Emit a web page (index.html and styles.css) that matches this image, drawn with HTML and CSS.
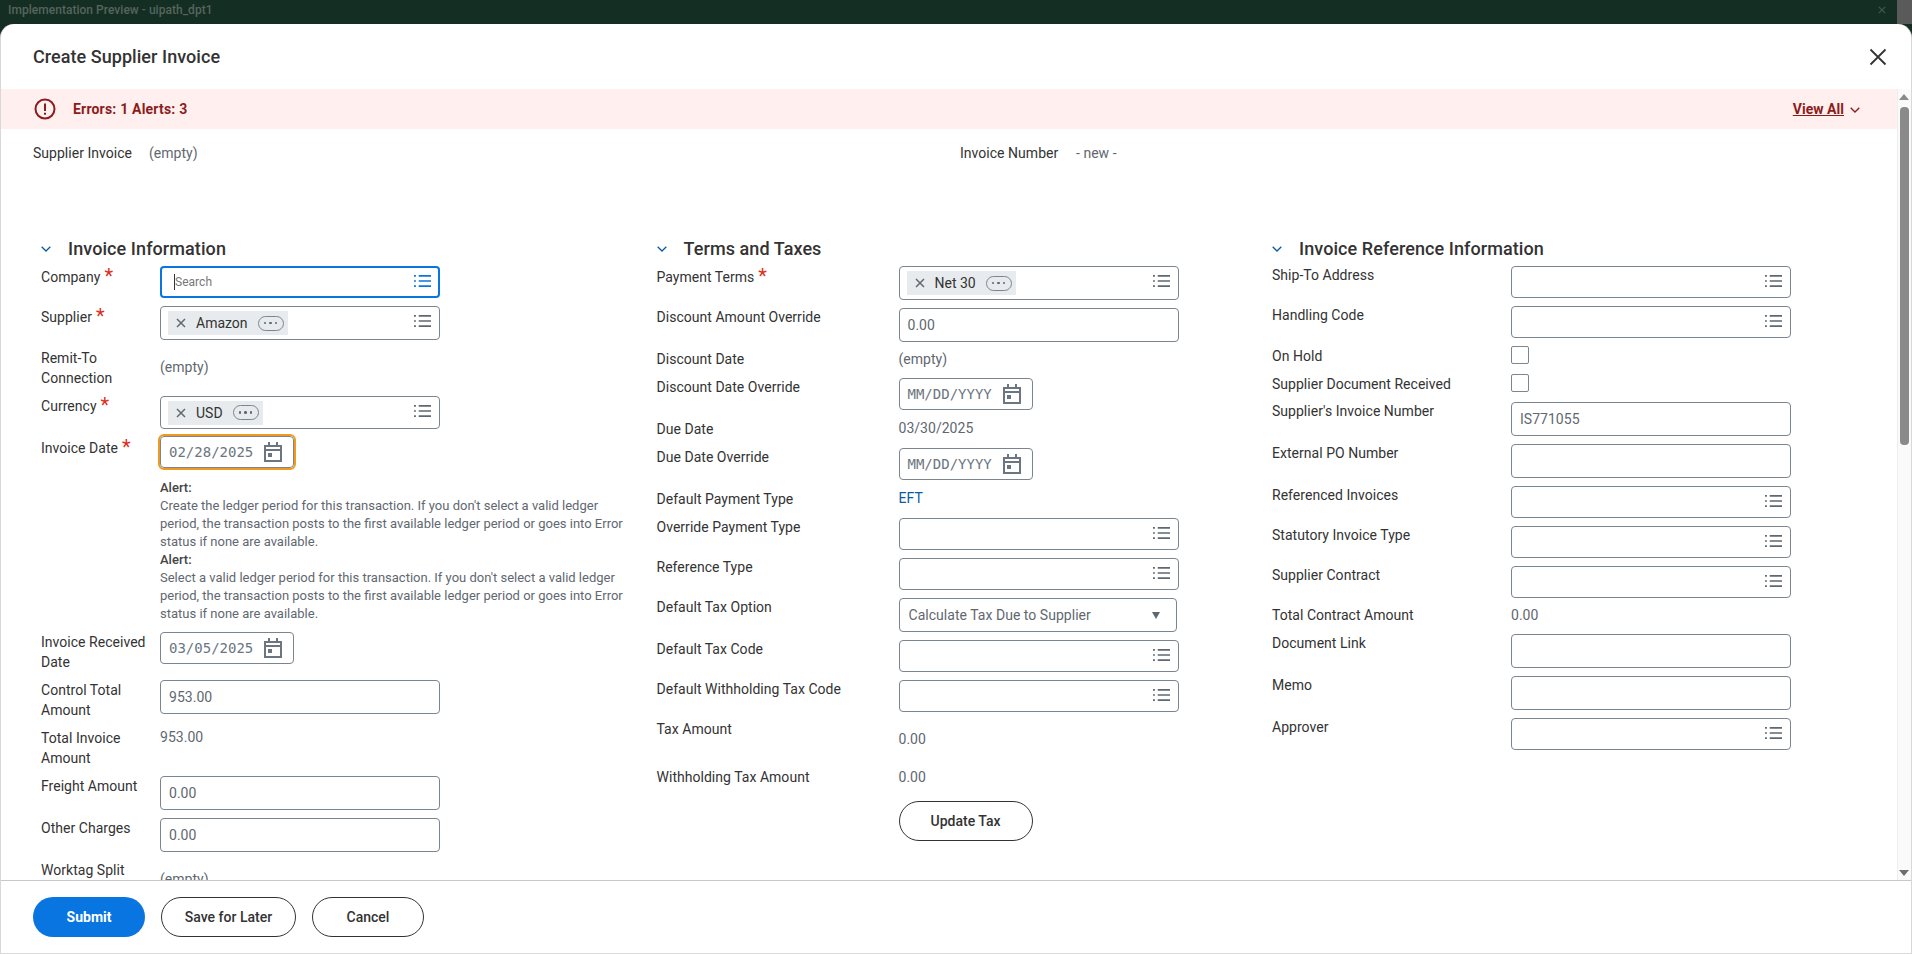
FILE: index.html
```html
<!DOCTYPE html>
<html lang="en">
<head>
  <meta charset="UTF-8" />
  <title>Create Supplier Invoice</title>
  <link rel="stylesheet" href="styles.css">
</head>
<body>
  <svg class="sprite" aria-hidden="true">
    <symbol id="i-list" viewBox="0 0 18 14">
      <path d="M5 1.5h13M5 7h13M5 12.500h13" fill="none" stroke="currentColor" stroke-width="1.8"/>
      <path d="M0 .6h2v1.800H0zM0 6.100h2v1.800H0zM0 11.600h2v1.800H0z" fill="currentColor"/>
    </symbol>
    <symbol id="i-cal" viewBox="0 0 18 20">
      <path d="M1 4h16v15H1zM1 8h16" fill="none" stroke="currentColor" stroke-width="2"/>
      <path d="M4 0h2v4H4zM12 0h2v4h-2zM4 11h4v4H4z" fill="currentColor"/>
    </symbol>
    <symbol id="i-x" viewBox="0 0 10 10">
      <path d="M1 1l8 8M9 1l-8 8" fill="none" stroke="currentColor" stroke-width="1.500"/>
    </symbol>
    <symbol id="i-chev" viewBox="0 0 10 6">
      <path d="M.7.7L5 5l4.300-4.300" fill="none" stroke="currentColor" stroke-width="1.300"/>
    </symbol>
  </svg>

  <div class="topbar">
    <span class="topbar-title">Implementation Preview - uipath_dpt1</span>
    <svg class="topbar-x"><use href="#i-x"/></svg>
  </div>

  <div class="modal">
    <header class="modal-head">
      <h1>Create Supplier Invoice</h1>
      <svg class="modal-close" viewBox="0 0 18 18"><path d="M1.500 1.500l15 15M16.500 1.500l-15 15" fill="none" stroke="currentColor" stroke-width="1.800"/></svg>
    </header>

    <div class="modal-middle">
      <main class="content">
        <div class="banner">
          <svg class="banner-icon" viewBox="0 0 22 22">
            <circle cx="11" cy="11" r="9.500" fill="none" stroke="currentColor" stroke-width="2"/>
            <path d="M10 5.500h2v7.500h-2zM10 14.800h2v2h-2z" fill="currentColor"/>
          </svg>
          <span class="banner-text">Errors: 1 Alerts: 3</span>
          <a class="banner-link">View All</a>
          <svg class="banner-chev"><use href="#i-chev"/></svg>
        </div>

        <div class="meta">
          <div class="meta-item">
            <span class="meta-label">Supplier Invoice</span>
            <span class="value">(empty)</span>
          </div>
          <div class="meta-item">
            <span class="meta-label">Invoice Number</span>
            <span class="value">- new -</span>
          </div>
        </div>

        <div class="columns">
          <!-- Invoice Information -->
          <section class="col col-1">
            <h2 class="section-title"><svg class="section-chev"><use href="#i-chev"/></svg>Invoice Information</h2>
            <div class="rows">
              <div class="row">
                <div class="label label-req">Company<span class="req">*</span></div>
                <div class="field field-focus"><span class="search">Search</span><svg class="i-list"><use href="#i-list"/></svg></div>
              </div>
              <div class="row">
                <div class="label label-req">Supplier<span class="req">*</span></div>
                <div class="field field-chip">
                  <span class="chip"><svg class="chip-x"><use href="#i-x"/></svg>Amazon<span class="chip-more"><i></i><i></i><i></i></span></span>
                  <svg class="i-list"><use href="#i-list"/></svg>
                </div>
              </div>
              <div class="row">
                <div class="label">Remit-To Connection</div>
                <div class="value value-mid">(empty)</div>
              </div>
              <div class="row">
                <div class="label">Currency<span class="req">*</span></div>
                <div class="field field-chip field-chip-sm">
                  <span class="chip"><svg class="chip-x"><use href="#i-x"/></svg>USD<span class="chip-more"><i></i><i></i><i></i></span></span>
                  <svg class="i-list"><use href="#i-list"/></svg>
                </div>
              </div>
              <div class="row">
                <div class="label label-req">Invoice Date<span class="req">*</span></div>
                <div class="field-stack">
                  <div class="field field-date field-alert"><span class="mono">02/28/2025</span><svg class="i-cal"><use href="#i-cal"/></svg></div>
                  <div class="alert">
                    <div class="alert-title">Alert:</div>
                    <div>Create the ledger period for this transaction. If you don't select a valid ledger period, the transaction posts to the first available ledger period or goes into Error status if none are available.</div>
                    <div class="alert-title">Alert:</div>
                    <div>Select a valid ledger period for this transaction. If you don't select a valid ledger period, the transaction posts to the first available ledger period or goes into Error status if none are available.</div>
                  </div>
                </div>
              </div>
              <div class="row">
                <div class="label">Invoice Received Date</div>
                <div class="field field-date"><span class="mono">03/05/2025</span><svg class="i-cal"><use href="#i-cal"/></svg></div>
              </div>
              <div class="row">
                <div class="label">Control Total Amount</div>
                <div class="field field-text">953.00</div>
              </div>
              <div class="row">
                <div class="label">Total Invoice Amount</div>
                <div class="value">953.00</div>
              </div>
              <div class="row">
                <div class="label">Freight Amount</div>
                <div class="field field-text">0.00</div>
              </div>
              <div class="row">
                <div class="label">Other Charges</div>
                <div class="field field-text">0.00</div>
              </div>
              <div class="row row-tall">
                <div class="label">Worktag Split</div>
                <div class="value value-mid">(empty)</div>
              </div>
            </div>
          </section>

          <!-- Terms and Taxes -->
          <section class="col col-2">
            <h2 class="section-title"><svg class="section-chev"><use href="#i-chev"/></svg>Terms and Taxes</h2>
            <div class="rows">
              <div class="row">
                <div class="label label-req">Payment Terms<span class="req">*</span></div>
                <div class="field field-chip">
                  <span class="chip"><svg class="chip-x"><use href="#i-x"/></svg>Net 30<span class="chip-more"><i></i><i></i><i></i></span></span>
                  <svg class="i-list"><use href="#i-list"/></svg>
                </div>
              </div>
              <div class="row">
                <div class="label">Discount Amount Override</div>
                <div class="field field-text">0.00</div>
              </div>
              <div class="row">
                <div class="label">Discount Date</div>
                <div class="value">(empty)</div>
              </div>
              <div class="row">
                <div class="label">Discount Date Override</div>
                <div class="field field-date"><span class="mono">MM/DD/YYYY</span><svg class="i-cal"><use href="#i-cal"/></svg></div>
              </div>
              <div class="row row-read">
                <div class="label">Due Date</div>
                <div class="value">03/30/2025</div>
              </div>
              <div class="row">
                <div class="label">Due Date Override</div>
                <div class="field field-date"><span class="mono">MM/DD/YYYY</span><svg class="i-cal"><use href="#i-cal"/></svg></div>
              </div>
              <div class="row row-read">
                <div class="label">Default Payment Type</div>
                <div class="value value-link">EFT</div>
              </div>
              <div class="row">
                <div class="label">Override Payment Type</div>
                <div class="field"><svg class="i-list"><use href="#i-list"/></svg></div>
              </div>
              <div class="row">
                <div class="label">Reference Type</div>
                <div class="field"><svg class="i-list"><use href="#i-list"/></svg></div>
              </div>
              <div class="row">
                <div class="label">Default Tax Option</div>
                <div class="field field-select">Calculate Tax Due to Supplier<span class="caret"></span></div>
              </div>
              <div class="row">
                <div class="label">Default Tax Code</div>
                <div class="field"><svg class="i-list"><use href="#i-list"/></svg></div>
              </div>
              <div class="row">
                <div class="label">Default Withholding Tax Code</div>
                <div class="field"><svg class="i-list"><use href="#i-list"/></svg></div>
              </div>
              <div class="row row-tax">
                <div class="label">Tax Amount</div>
                <div class="value value-low">0.00</div>
              </div>
              <div class="row">
                <div class="label">Withholding Tax Amount</div>
                <div class="value">0.00</div>
              </div>
              <div class="row row-btn">
                <button class="btn btn-update">Update Tax</button>
              </div>
            </div>
          </section>

          <!-- Invoice Reference Information -->
          <section class="col col-3">
            <h2 class="section-title"><svg class="section-chev"><use href="#i-chev"/></svg>Invoice Reference Information</h2>
            <div class="rows">
              <div class="row">
                <div class="label">Ship-To Address</div>
                <div class="field"><svg class="i-list"><use href="#i-list"/></svg></div>
              </div>
              <div class="row">
                <div class="label">Handling Code</div>
                <div class="field"><svg class="i-list"><use href="#i-list"/></svg></div>
              </div>
              <div class="row row-check">
                <div class="label">On Hold</div>
                <div class="checkbox"></div>
              </div>
              <div class="row row-check">
                <div class="label">Supplier Document Received</div>
                <div class="checkbox"></div>
              </div>
              <div class="row">
                <div class="label">Supplier's Invoice Number</div>
                <div class="field field-text">IS771055</div>
              </div>
              <div class="row">
                <div class="label">External PO Number</div>
                <div class="field field-text"></div>
              </div>
              <div class="row">
                <div class="label">Referenced Invoices</div>
                <div class="field"><svg class="i-list"><use href="#i-list"/></svg></div>
              </div>
              <div class="row">
                <div class="label">Statutory Invoice Type</div>
                <div class="field"><svg class="i-list"><use href="#i-list"/></svg></div>
              </div>
              <div class="row">
                <div class="label">Supplier Contract</div>
                <div class="field"><svg class="i-list"><use href="#i-list"/></svg></div>
              </div>
              <div class="row">
                <div class="label">Total Contract Amount</div>
                <div class="value">0.00</div>
              </div>
              <div class="row">
                <div class="label">Document Link</div>
                <div class="field field-text"></div>
              </div>
              <div class="row">
                <div class="label">Memo</div>
                <div class="field field-text"></div>
              </div>
              <div class="row">
                <div class="label">Approver</div>
                <div class="field"><svg class="i-list"><use href="#i-list"/></svg></div>
              </div>
            </div>
          </section>
        </div>
      </main>

      <div class="scrollbar">
        <span class="scroll-up"></span>
        <span class="scroll-thumb"></span>
        <span class="scroll-down"></span>
      </div>
    </div>

    <footer class="modal-foot">
      <button class="btn btn-primary">Submit</button>
      <button class="btn btn-save">Save for Later</button>
      <button class="btn btn-cancel">Cancel</button>
    </footer>
  </div>
</body>
</html>
```

FILE: styles.css
```css
* {
  box-sizing: border-box;
}

html,
body {
  height: 100%;
}

body {
  margin: 0;
  display: flex;
  flex-direction: column;
  overflow: hidden;
  font-family: Roboto, "Liberation Sans", sans-serif;
  font-size: 14px;
  line-height: 20px;
  letter-spacing: 0.03px;
  color: #333;
  background-color: #152e23;
}

.sprite {
  display: none;
}

/* top strip behind the dialog */
.topbar {
  height: 24px;
  flex: none;
  display: flex;
  align-items: center;
  justify-content: space-between;
  padding: 0 26px 4px 8px;
  background: linear-gradient(to right, #152e23 1897px, #5a5a5a 1897px);
}

.topbar-title {
  font-size: 12px;
  font-weight: 500;
  color: #56655d;
}

.topbar-x {
  width: 8px;
  height: 8px;
  color: #3f5a4e;
}

.modal {
  flex: 1;
  min-height: 0;
  display: flex;
  flex-direction: column;
  background-color: white;
  border-radius: 14px 14px 0 0;
  border-left: 1px solid #d8d8d8;
  border-right: 1px solid #d8d8d8;
  border-bottom: 1px solid #d8d8d8;
}

.modal-head {
  height: 65px;
  flex: none;
  display: flex;
  align-items: center;
  justify-content: space-between;
  padding: 0 24px 0 32px;
}

.modal-head h1 {
  margin: 0;
  font-size: 18px;
  font-weight: 500;
  line-height: 24px;
  letter-spacing: 0.05px;
}

.modal-close {
  width: 18px;
  height: 18px;
  color: #333;
}

.modal-middle {
  flex: 1;
  min-height: 0;
  display: flex;
}

.content {
  flex: 1;
  min-width: 0;
  overflow: hidden;
}

.banner {
  height: 40px;
  display: flex;
  align-items: center;
  padding: 0 0 0 33px;
  background-color: #ffefee;
  color: #8c1c1c;
  font-weight: 700;
}

.banner-icon {
  width: 22px;
  height: 22px;
  margin-right: 17px;
}

.banner-text {
  flex: 1;
  letter-spacing: 0.2px;
}

.banner-link {
  text-decoration: underline;
}

.banner-chev {
  width: 10px;
  height: 6px;
  margin: 2px 37px 0 6px;
}

.meta {
  display: grid;
  grid-template-columns: 927px 1fr;
  padding: 14px 0 0 32px;
}

.meta-item {
  display: flex;
}

.meta-label {
  width: 116px;
}

.value {
  color: #5f6870;
}

.row .value {
  margin-top: -1px;
}

.row .value-mid {
  align-self: center;
  padding-bottom: 2px;
}

.row .value-low {
  padding-top: 10px;
}

.row .value-link {
  color: #0b5aa5;
}

.columns {
  display: grid;
  grid-template-columns: 615.500px 615.500px 1fr;
  padding: 74px 0 0 40px;
}

.section-title {
  height: 24px;
  margin: 0 0 5px;
  display: flex;
  align-items: center;
  font-size: 18px;
  font-weight: 500;
  line-height: 24px;
  letter-spacing: 0.08px;
}

.section-chev {
  width: 10px;
  height: 6px;
  margin-right: 17px;
  color: #0b5aa5;
}

.rows {
  display: flex;
  flex-direction: column;
  gap: 8px;
}

.row {
  min-height: 20px;
  display: flex;
  align-items: flex-start;
}

.row-tall {
  min-height: 40px;
}

.row-read {
  min-height: 21px;
}

.row-tax {
  min-height: 40px;
}

.row-btn {
  margin-top: 5px;
  padding-left: 242px;
}

.label {
  flex: none;
}

.col-1 .label {
  width: 119px;
}

.col-2 .label {
  width: 242px;
  margin-top: -1px;
}

.col-3 .label {
  width: 239px;
  margin-top: -1px;
}

.row-read .label,
.row-check .label {
  margin-top: 0;
}

.label.label-req {
  margin-top: 1px;
}

.req {
  display: inline-block;
  margin-left: 4px;
  font-size: 20px;
  line-height: 0;
  color: #de2e21;
  vertical-align: -1px;
}

.field {
  position: relative;
  width: 280px;
  height: 32px;
  flex: none;
  display: flex;
  align-items: center;
  padding: 0 8px;
  background-color: white;
  border: 1px solid #7b858f;
  border-radius: 4px;
  color: #5f6870;
}

.field-focus {
  border: 2px solid #0875e1;
}

.field-text,
.field-chip,
.field-select {
  height: 34px;
}

.field-chip {
  padding-left: 7px;
}

.field-chip-sm {
  height: 33px;
}

.field-select {
  width: 278px;
  justify-content: space-between;
  padding: 0 16px 0 9px;
}

.caret {
  width: 0;
  height: 0;
  border-left: 4.500px solid transparent;
  border-right: 4.500px solid transparent;
  border-top: 7px solid #5f6870;
}

.field-date {
  width: 134px;
  margin-bottom: 1px;
}

.field-alert {
  outline: 2px solid #f09a1f;
  margin-top: -1px;
}

.field-stack {
  width: 470px;
}

.mono {
  font-family: "DejaVu Sans Mono", "Liberation Mono", monospace;
  font-size: 14px;
  letter-spacing: 0;
  color: #6b7680;
}

.search {
  margin-left: 4px;
  border-left: 1px solid #333;
  font-size: 12px;
  line-height: 16px;
  color: #777;
}

.i-list {
  position: absolute;
  right: 8px;
  top: 50%;
  width: 17px;
  height: 14px;
  margin-top: -8px;
  color: #5f6870;
}

.field-chip .i-list {
  margin-top: -9px;
}

.field-focus .i-list {
  right: 7px;
  color: #0875e1;
}

.i-cal {
  position: absolute;
  right: 11px;
  top: 50%;
  width: 18px;
  height: 20px;
  margin-top: -10px;
  color: #6b7680;
}

.chip {
  height: 24px;
  display: inline-flex;
  align-items: center;
  padding: 0 4px 0 8px;
  background-color: #e8ebed;
  color: #333;
  letter-spacing: 0;
}

.chip-x {
  width: 10px;
  height: 10px;
  margin-right: 10px;
  color: #5f6870;
}

.chip-more {
  width: 26px;
  height: 15px;
  margin-left: 10px;
  display: inline-flex;
  align-items: center;
  justify-content: center;
  gap: 3px;
  border: 1px solid #7b858f;
  border-radius: 8px;
}

.chip-more i {
  width: 2.500px;
  height: 2.500px;
  border-radius: 50%;
  background-color: #5f6870;
}

.alert {
  margin-top: 11px;
  padding-bottom: 1px;
  font-size: 13px;
  line-height: 18px;
  letter-spacing: 0;
  color: #5f6870;
}

.alert-title {
  font-weight: 500;
  color: #444;
}

.checkbox {
  width: 18px;
  height: 18px;
  border: 1px solid #7b858f;
  border-radius: 2px;
}

.btn {
  height: 40px;
  padding: 0;
  border: 1px solid #333;
  border-radius: 20px;
  background-color: white;
  color: #333;
  font-family: inherit;
  font-size: 14px;
  font-weight: 500;
}

.btn-primary {
  width: 112px;
  border: none;
  background-color: #0875e1;
  color: white;
  font-weight: 700;
}

.btn-save {
  width: 135px;
}

.btn-cancel {
  width: 112px;
}

.btn-update {
  width: 134px;
}

.modal-foot {
  height: 73px;
  flex: none;
  display: flex;
  gap: 16px;
  padding: 16px 0 0 32px;
  border-top: 1px solid #c8c8c8;
}

/* drawn scrollbar on the right of the form */
.scrollbar {
  width: 14px;
  flex: none;
  display: flex;
  flex-direction: column;
  align-items: center;
  padding-right: 1px;
  background-color: #fafafa;
  border-left: 1px solid #eee;
}

.scroll-up,
.scroll-down {
  width: 0;
  height: 0;
  flex: none;
  border-left: 5px solid transparent;
  border-right: 5px solid transparent;
}

.scroll-up {
  margin-top: 5px;
  border-bottom: 6px solid #8a8a8a;
}

.scroll-thumb {
  width: 9px;
  height: 338px;
  margin-top: 7px;
  border-radius: 4px;
  background-color: #8a8a8a;
}

.scroll-down {
  margin-top: auto;
  margin-bottom: 4px;
  border-top: 6px solid #6e6e6e;
}
```
